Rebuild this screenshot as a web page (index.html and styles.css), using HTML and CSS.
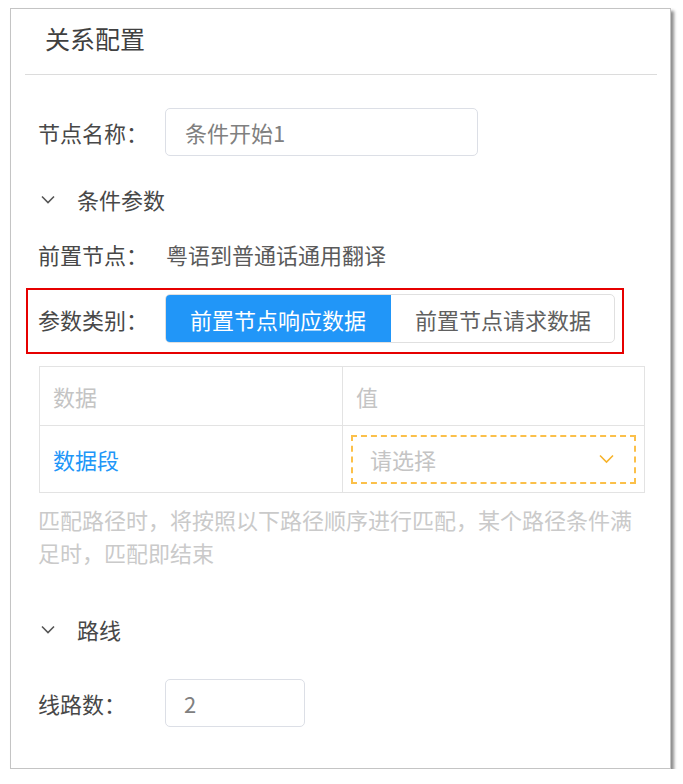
FILE: index.html
```html
<!DOCTYPE html>
<html lang="zh-CN">
<head>
<meta charset="utf-8">
<title>关系配置</title>
<link rel="stylesheet" href="styles.css">
</head>
<body>
<div class="panel">
  <div class="panel-head">
    <div class="title">关系配置</div>
  </div>
  <div class="panel-body">
    <div class="form-row row-name">
      <div class="label">节点名称：</div>
      <div class="input input-wide">条件开始1</div>
    </div>

    <div class="section">
      <svg class="chev" width="14" height="9" viewBox="0 0 14 9"><path d="M1 1.5 L7 7.5 L13 1.5" fill="none" stroke="#555" stroke-width="1.6"/></svg>
      <span>条件参数</span>
    </div>

    <div class="form-row row-prev">
      <div class="label">前置节点：</div>
      <div class="value">粤语到普通话通用翻译</div>
    </div>

    <div class="highlight">
      <div class="form-row">
        <div class="label label-in">参数类别：</div>
        <div class="segmented">
          <div class="seg seg-active">前置节点响应数据</div>
          <div class="seg">前置节点请求数据</div>
        </div>
      </div>
    </div>

    <div class="table">
      <div class="tr thead">
        <div class="td td-first">数据</div>
        <div class="td">值</div>
      </div>
      <div class="tr tbody">
        <div class="td td-first link">数据段</div>
        <div class="td td-select">
          <div class="select">
            <span>请选择</span>
            <svg width="15" height="10" viewBox="0 0 15 10"><path d="M1 1.5 L7.5 8 L14 1.5" fill="none" stroke="#f7b32b" stroke-width="1.6"/></svg>
          </div>
        </div>
      </div>
    </div>

    <p class="hint">匹配路径时，将按照以下路径顺序进行匹配，某个路径条件满<br>足时，匹配即结束</p>

    <div class="section section-route">
      <svg class="chev" width="14" height="9" viewBox="0 0 14 9"><path d="M1 1.5 L7 7.5 L13 1.5" fill="none" stroke="#555" stroke-width="1.6"/></svg>
      <span>路线</span>
    </div>

    <div class="form-row row-count">
      <div class="label">线路数：</div>
      <div class="input input-small">2</div>
    </div>
  </div>
</div>
</body>
</html>
```

FILE: styles.css
```css
* { box-sizing: border-box; }

html, body {
  margin: 0;
  padding: 0;
  background: #ffffff;
}

body {
  font-family: "Noto Sans CJK SC", "Noto Sans", sans-serif;
  font-size: 22px;
  color: #484848;
}

.panel {
  margin: 8px 0 0 10px;
  width: 661px;
  height: 761px;
  border: 1px solid #c4c4c4;
  background: #fff;
  box-shadow: 3px 3px 3px rgba(0, 0, 0, 0.45);
}

.panel-head {
  margin: 0 13px 0 14px;
  height: 66px;
  border-bottom: 1px solid #dcdcdc;
  display: flex;
  align-items: center;
  padding-left: 20px;
  padding-bottom: 6px;
}

.title {
  font-size: 25px;
  color: #404040;
  line-height: 1;
}

.panel-body {
  padding: 0 0 0 27px;
  display: flex;
  flex-direction: column;
}

.form-row {
  display: flex;
  align-items: center;
}

.label {
  width: 127px;
  flex: none;
  color: #484848;
  line-height: 1;
}

.row-name {
  margin-top: 33px;
}

.input {
  height: 48px;
  border: 1px solid #dcdfe6;
  border-radius: 5px;
  display: flex;
  align-items: center;
  padding-left: 19px;
  color: #808080;
}

.input-wide { width: 313px; }
.input-small { width: 140px; padding-left: 18px; }

.section {
  height: 40px;
  margin-top: 23px;
  display: flex;
  align-items: center;
  color: #484848;
}

.section .chev {
  margin-left: 3px;
  margin-right: 22px;
}

.row-prev {
  height: 40px;
  margin-top: 15px;
}

.value {
  color: #5a5a5a;
  margin-left: 1px;
}

.highlight {
  margin-top: 14px;
  margin-left: -12px;
  width: 598px;
  border: 2px solid #e60000;
  padding: 4px 0 9px 10px;
}

.label-in {
  width: 127px;
}

.segmented {
  display: flex;
  width: 450px;
  height: 49px;
  border: 1px solid #e0e0e0;
  border-radius: 5px;
  overflow: hidden;
}

.seg {
  flex: none;
  width: 224px;
  display: flex;
  align-items: center;
  justify-content: center;
  color: #606060;
}

.seg-active {
  width: 226px;
  margin: -1px 0 -1px -1px;
  background: #2196f8;
  color: #ffffff;
  border-radius: 5px 0 0 5px;
}

.table {
  margin-top: 12px;
  margin-left: 1px;
  width: 606px;
  border: 1px solid #e3e3e3;
}

.tr {
  display: flex;
}

.thead {
  height: 59px;
  border-bottom: 1px solid #e3e3e3;
}

.tbody {
  height: 66px;
}

.td {
  flex: 1;
  display: flex;
  align-items: center;
  padding-left: 13px;
  color: #c4c4c4;
}

.td-first {
  flex: none;
  width: 303px;
  border-right: 1px solid #e3e3e3;
}

.link {
  color: #2196f8;
}

.td-select {
  padding: 8px 8px 8px 8px;
}

.select {
  width: 100%;
  height: 49px;
  border: 2px dashed #fbc04a;
  display: flex;
  align-items: center;
  justify-content: space-between;
  padding: 0 20px 0 17px;
  color: #c4c4c4;
}

.hint {
  margin: 10px 0 0 0;
  white-space: nowrap;
  font-size: 22px;
  line-height: 33px;
  color: #cacaca;
}

.section-route {
  margin-top: 40px;
}

.row-count {
  margin-top: 30px;
}
```
